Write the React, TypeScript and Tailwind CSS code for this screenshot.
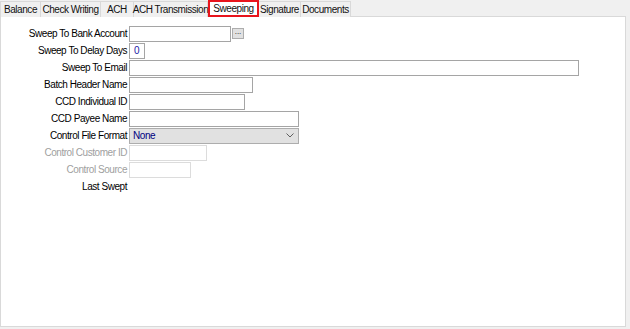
import React from 'react';

const tabs = [
  { name: 'Balance', w: 41 },
  { name: 'Check Writing', w: 60 },
  { name: 'ACH', w: 33 },
  { name: 'ACH Transmission', w: 74 },
  { name: 'Sweeping', w: 51, active: true },
  { name: 'Signature', w: 42 },
  { name: 'Documents', w: 50 },
];

function Field({ label, disabled, children }: { label: string; disabled?: boolean; children?: React.ReactNode }) {
  return (
    <div className="flex items-center h-[17px]">
      <div className={`w-[128px] pr-[2px] text-right whitespace-nowrap ${disabled ? 'text-[#a0a0a0]' : 'text-black'}`}>
        {label}
      </div>
      <div className="flex items-center">{children}</div>
    </div>
  );
}

function Box({ w, disabled, children }: { w: number; disabled?: boolean; children?: React.ReactNode }) {
  return (
    <div
      className={`h-[16px] border bg-white px-[3px] flex items-center ${disabled ? 'border-[#dcdcdc]' : 'border-[#a5a5a5]'}`}
      style={{ width: w }}
    >
      {children}
    </div>
  );
}

export default function App() {
  return (
    <div
      className="w-[630px] h-[329px] bg-[#f0f0f0] text-[10px] tracking-[-0.45px] text-[#111] overflow-hidden"
      style={{ fontFamily: '"Liberation Sans", Arial, sans-serif' }}
    >
      <div className="flex h-[17px] items-end">
        {tabs.map((t) =>
          t.active ? (
            <div
              key={t.name}
              className="h-[17px] border-2 border-[#e8141c] bg-white flex items-center justify-center whitespace-nowrap z-10"
              style={{ width: t.w }}
            >
              {t.name}
            </div>
          ) : (
            <div
              key={t.name}
              className="h-[16px] border-r border-t border-[#d9d9d9] first:border-l bg-[#f0f0f0] flex items-center justify-center whitespace-nowrap"
              style={{ width: t.w }}
            >
              {t.name}
            </div>
          )
        )}
      </div>
      <div className="w-[626px] h-[311px] bg-white border border-[#d9d9d9] -mt-px pt-[8px]">
        <Field label="Sweep To Bank Account">
          <Box w={102} />
          <div className="ml-[1px] w-[12px] h-[11px] bg-[#e1e1e1] border border-[#adadad] flex items-center justify-center text-[8px] leading-none pb-[3px] tracking-normal">
            ...
          </div>
        </Field>
        <Field label="Sweep To Delay Days">
          <Box w={16}>
            <span className="text-[#1a1aa6] pl-[1px]">0</span>
          </Box>
        </Field>
        <Field label="Sweep To Email">
          <Box w={450} />
        </Field>
        <Field label="Batch Header Name">
          <Box w={124} />
        </Field>
        <Field label="CCD Individual ID">
          <Box w={116} />
        </Field>
        <Field label="CCD Payee Name">
          <Box w={170} />
        </Field>
        <Field label="Control File Format">
          <div className="w-[170px] h-[16px] border border-[#adadad] bg-[#e1e1e1] flex items-center justify-between pl-[3px] pr-[4px]">
            <span className="text-[#000080]">None</span>
            <svg width="8" height="5" viewBox="0 0 8 5" fill="none">
              <path d="M0.5 0.5L4 4L7.5 0.5" stroke="#606060" strokeWidth="1" />
            </svg>
          </div>
        </Field>
        <Field label="Control Customer ID" disabled>
          <Box w={78} disabled />
        </Field>
        <Field label="Control Source" disabled>
          <Box w={62} disabled />
        </Field>
        <Field label="Last Swept" />
      </div>
    </div>
  );
}
